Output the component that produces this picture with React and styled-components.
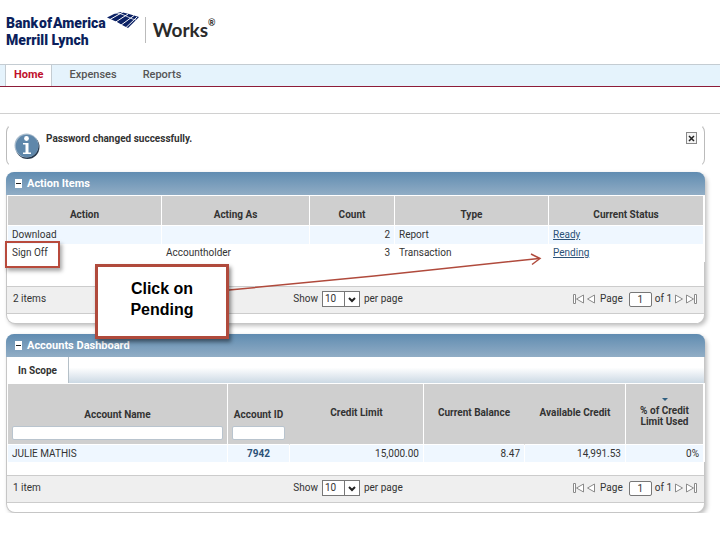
import React from 'react';
import styled, { createGlobalStyle } from 'styled-components';

const GlobalStyle = createGlobalStyle`
  * {
    box-sizing: border-box;
  }

  body {
    margin: 0;
    background: #fff;
    color: #333;
    font-family: Roboto, "Liberation Sans", Arial, sans-serif;
    font-size: 10px;
    line-height: 12px;
  }

  button, input, select {
    font: inherit;
    color: inherit;
  }
`;

const Page = styled.div`
  position: relative;
`;

const Header = styled.header`
  display: flex;
  align-items: flex-start;
  height: 64px;
  padding: 11px 6px 0;
`;

const BankName = styled.div`
  color: #0c1f5c;
  font-size: 14px;
  font-weight: 900;
  line-height: 17px;
  padding-top: 4px;
  white-space: nowrap;
`;

const BankLine = styled.div`
  display: flex;
  gap: 1px;
`;

const Flag = styled.svg`
  flex: none;
`;

const Works = styled.div`
  display: flex;
  height: 26px;
  margin: 6px 0 0 5px;
  padding-left: 7px;
  border-left: 1px solid #bbb;
  color: #2a2a2a;
  font-family: Lato, "Open Sans", sans-serif;
  font-size: 19px;
  font-weight: bold;
  line-height: 26px;

  sup {
    font-size: 9px;
    line-height: 12px;
  }
`;

const Nav = styled.nav`
  display: flex;
  height: 23px;
  padding-left: 5px;
  background: #e5f3fc;
  border-top: 1px solid #c4ccd2;
  border-bottom: 1px solid #8d1c38;
`;

const NavLink = styled.a`
  margin-right: ${(props) => (props.$active ? '4px' : '0')};
  padding: 0 ${(props) => (props.$active ? '8px' : '13px')};
  border: solid #c4ccd2;
  border-width: ${(props) => (props.$active ? '0 1px' : '0')};
  background: ${(props) => (props.$active ? '#fff' : 'transparent')};
  color: ${(props) => (props.$active ? '#c0102c' : '#555')};
  font-size: 11px;
  font-weight: ${(props) => (props.$active ? 'bold' : '500')};
  line-height: 20px;
  text-decoration: none;
`;

const SubNav = styled.div`
  height: 27px;
  border-bottom: 1px solid #d0d0d0;
`;

const Content = styled.main`
  display: flex;
  flex-direction: column;
  padding: 10px 15px 0 6px;
`;

const Message = styled.div`
  display: flex;
  align-items: flex-start;
  height: 43px;
  padding: 7px 7px 0 7px;
  border: 1px solid #fff;
  border-left-color: #bbb;
  border-right-color: #bbb;
  border-radius: 8px;
`;

const MessageText = styled.p`
  flex: 1;
  margin: 0 0 0 6px;
  padding-top: 1px;
  font-weight: bold;
`;

const CloseButton = styled.button`
  display: flex;
  align-items: center;
  justify-content: center;
  width: 11px;
  height: 12px;
  padding: 0;
  background: #f4f4f4;
  border: 1px solid #888;
`;

const Panel = styled.section`
  margin-top: ${(props) => props.$gap};
  padding-bottom: 9px;
  background: #fff;
  border: 1px solid #c6c6c6;
  border-top: 0;
  border-radius: 9px;
  box-shadow: 2px 2px 4px rgba(0, 0, 0, 0.25);
`;

const PanelTitle = styled.div`
  display: flex;
  align-items: center;
  gap: 5px;
  height: 23px;
  margin: 0 -1px;
  padding: 0 9px;
  background: linear-gradient(#608cb1, #91adc5);
  border-radius: 8px 8px 0 0;
  color: #fff;

  h2 {
    margin: 0;
    font-size: 11px;
    line-height: 14px;
  }
`;

const Toggle = styled.button`
  display: flex;
  align-items: center;
  width: 7px;
  height: 9px;
  padding: 0 1px;
  background: #fff;
  border: 0;

  &::before {
    content: '';
    flex: 1;
    height: 1px;
    background: #222;
  }
`;

const TabBar = styled.div`
  display: flex;
  height: 26px;
  background: linear-gradient(#fff 40%, #ccd9e4);
`;

const Tab = styled.button`
  width: 62px;
  padding: 2px 0 0;
  background: #fff;
  border: 0;
  border-right: 1px solid #b5c0c8;
  font-weight: bold;
`;

// Column widths are proportions: fixed layout scales them to the panel
const Table = styled.table`
  width: 100%;
  table-layout: fixed;
  border-collapse: separate;
  border-spacing: 0;
  border: solid #fff;
  border-width: 1px 1px 0;
`;

const HeadCell = styled.th`
  width: ${(props) => props.$width};
  height: ${(props) => (props.$tall ? '61px' : '30px')};
  padding: ${(props) => (props.$tall ? '0 4px 4px' : '8px 4px 0')};
  background: #cfcfcf;
  border-right: 1px solid ${(props) => (props.$plain ? '#cfcfcf' : '#fff')};
  border-bottom: 1px solid #fff;
  vertical-align: ${(props) => (props.$filter ? 'bottom' : 'middle')};
  line-height: 11px;
`;

const SortMark = styled.svg`
  display: block;
  margin: 0 auto 3px;
`;

const FilterInput = styled.input`
  display: block;
  width: 100%;
  height: 14px;
  margin-top: 6px;
  padding: 0 3px;
  background: #fff;
  border: 1px solid #b9c4ce;
  border-radius: 2px;
`;

const Cell = styled.td`
  height: ${(props) => (props.$low ? '17px' : '18px')};
  padding: 0 4px;
  background: ${(props) => (props.$shaded ? '#eff7ff' : '#fff')};
  border-right: 1px solid #fff;
  text-align: ${(props) => props.$align || 'left'};

  a {
    color: #2c5277;
  }
`;

const IdLink = styled.a`
  font-weight: bold;
  text-decoration: none;
`;

const PanelFooter = styled.div`
  display: grid;
  grid-template-columns: 1fr auto 1fr;
  align-items: center;
  height: 28px;
  margin-top: ${(props) => props.$gap};
  padding: 0 6px 2px;
  background: #efefef;
  border: solid #ccc;
  border-width: 1px 0;
`;

const PageSize = styled.label`
  display: flex;
  align-items: center;
  gap: 4px;
  margin-right: 15px;
`;

const SelectBox = styled.span`
  display: grid;
  grid-template-columns: 21px 15px;
  width: 38px;
  height: 16px;
  background: #fff;
  border: 1px solid #777;

  select, svg {
    grid-row: 1;
  }

  select {
    grid-column: 1 / 3;
    padding: 0 2px;
    appearance: none;
    background: transparent;
    border: 0;
    line-height: 14px;
  }

  svg {
    grid-column: 2;
    pointer-events: none;
  }
`;

const Pager = styled.div`
  display: flex;
  align-items: center;
  justify-content: flex-end;
  gap: 3px;

  label {
    display: flex;
    align-items: center;
    gap: 6px;
    margin-left: 2px;
  }
`;

const PageInput = styled.input`
  width: 23px;
  height: 15px;
  padding: 0;
  background: #fff;
  border: 1px solid #777;
  border-radius: 2px;
  text-align: center;
`;

const PagerButton = styled.button`
  display: flex;
  padding: 0;
  background: none;
  border: 0;
`;

// Training notes drawn over the page
const Highlight = styled.div`
  position: absolute;
  top: 241px;
  left: 5px;
  width: 55px;
  height: 27px;
  border: 2px solid #b84a3c;
  box-shadow: 2px 3px 4px rgba(0, 0, 0, 0.35);
`;

const Callout = styled.div`
  position: absolute;
  top: 264px;
  left: 95px;
  display: flex;
  align-items: center;
  justify-content: center;
  width: 134px;
  height: 75px;
  padding: 0 28px 6px;
  background: #fff;
  border: 3px solid #b04a3c;
  box-shadow: 2px 3px 4px rgba(0, 0, 0, 0.45);
  color: #000;
  font-family: "Liberation Sans", Arial, sans-serif;
  font-size: 16px;
  font-weight: bold;
  line-height: 21px;
  text-align: center;
`;

const Arrow = styled.svg`
  position: absolute;
  top: 250px;
  left: 229px;
  pointer-events: none;
`;

function BankFlag() {
  return (
    <Flag width="34" height="19" viewBox="0 0 34 19">
      <path d="M1 6.500 9 2.500 15 1l8 2 10 3-11 11-5-2.500-6-3.500z" fill="#0c2265" />
      <g fill="none" stroke="#fff">
        <path d="M4 8.500 17 1M9 11.500 22 3M14.500 14.500 28 4.500M19.500 17 31 6" />
        <path d="M8 2c5 0 8 1 12 3s6 3 10 4" strokeWidth=".8" />
      </g>
    </Flag>
  );
}

function InfoIcon() {
  return (
    <svg width="26" height="28" viewBox="0 0 26 28">
      <circle cx="13.5" cy="15" r="12" fill="#27384c" />
      <circle cx="12.5" cy="13.5" r="12" fill="#a9bccd" />
      <circle cx="13" cy="14" r="11.3" fill="#5f87aa" />
      <circle cx="12.5" cy="6.5" r="2.4" fill="#fff" />
      <path d="M9 11h5.5v9.500H17V22H9v-1.500h2.500v-8H9z" fill="#fff" />
    </svg>
  );
}

function PagerIcon({ bar, back }) {
  return (
    <svg width={bar ? 12 : 8} height="10" viewBox={bar ? '0 0 12 10' : '0 0 8 10'}>
      <g
        fill="#fff"
        stroke="#8a8a8a"
        transform={back ? `translate(${bar ? 12 : 8} 0) scale(-1 1)` : undefined}
      >
        <path d="M.5 1v8l7-4z" />
        {bar && <path d="M8.500.5h2v9h-2z" />}
      </g>
    </svg>
  );
}

function Footer({ count, gap }) {
  return (
    <PanelFooter $gap={gap}>
      <span>{count}</span>
      <PageSize>
        Show
        <SelectBox>
          <select defaultValue="10">
            <option>10</option>
            <option>25</option>
            <option>50</option>
          </select>
          <svg width="15" height="14" viewBox="0 0 15 14">
            <path d="M.5 0v14" stroke="#777" />
            <path d="m5 6 3 3 3-3" fill="none" stroke="#222" strokeWidth="2" />
          </svg>
        </SelectBox>
        per page
      </PageSize>
      <Pager>
        <PagerButton aria-label="First page"><PagerIcon bar back /></PagerButton>
        <PagerButton aria-label="Previous page"><PagerIcon back /></PagerButton>
        <label>
          Page
          <PageInput type="text" defaultValue="1" />
        </label>
        <span>of 1</span>
        <PagerButton aria-label="Next page"><PagerIcon /></PagerButton>
        <PagerButton aria-label="Last page"><PagerIcon bar /></PagerButton>
      </Pager>
    </PanelFooter>
  );
}

function ActionItems() {
  return (
    <Panel $gap="5px">
      <PanelTitle>
        <Toggle aria-label="Collapse" />
        <h2>Action Items</h2>
      </PanelTitle>
      <Table>
        <thead>
          <tr>
            <HeadCell $width="154px">Action</HeadCell>
            <HeadCell $width="148px">Acting As</HeadCell>
            <HeadCell $width="85px">Count</HeadCell>
            <HeadCell $width="154px">Type</HeadCell>
            <HeadCell $width="155px">Current Status</HeadCell>
          </tr>
        </thead>
        <tbody>
          <tr>
            <Cell $shaded>Download</Cell>
            <Cell $shaded />
            <Cell $shaded $align="right">2</Cell>
            <Cell $shaded>Report</Cell>
            <Cell $shaded><a href="#ready">Ready</a></Cell>
          </tr>
          <tr>
            <Cell>Sign Off</Cell>
            <Cell>Accountholder</Cell>
            <Cell $align="right">3</Cell>
            <Cell>Transaction</Cell>
            <Cell><a href="#pending">Pending</a></Cell>
          </tr>
        </tbody>
      </Table>
      <Footer count="2 items" gap="24px" />
    </Panel>
  );
}

function AccountsDashboard() {
  return (
    <Panel $gap="10px">
      <PanelTitle>
        <Toggle aria-label="Collapse" />
        <h2>Accounts Dashboard</h2>
      </PanelTitle>
      <TabBar>
        <Tab>In Scope</Tab>
      </TabBar>
      <Table>
        <thead>
          <tr>
            <HeadCell $tall $filter $width="220px">
              Account Name
              <FilterInput type="text" aria-label="Account Name" />
            </HeadCell>
            <HeadCell $tall $filter $plain $width="62px">
              Account ID
              <FilterInput type="text" aria-label="Account ID" />
            </HeadCell>
            <HeadCell $tall $width="134px">Credit Limit</HeadCell>
            <HeadCell $tall $plain $width="101px">Current Balance</HeadCell>
            <HeadCell $tall $width="101px">Available Credit</HeadCell>
            <HeadCell $tall $width="78px">
              <SortMark width="6" height="4" viewBox="0 0 6 4">
                <path d="M0 0h6L3 3z" fill="#2f5f80" />
              </SortMark>
              % of Credit Limit Used
            </HeadCell>
          </tr>
        </thead>
        <tbody>
          <tr>
            <Cell $low $shaded>JULIE MATHIS</Cell>
            <Cell $low $shaded $align="center"><IdLink href="#7942">7942</IdLink></Cell>
            <Cell $low $shaded $align="right">15,000.00</Cell>
            <Cell $low $shaded $align="right">8.47</Cell>
            <Cell $low $shaded $align="right">14,991.53</Cell>
            <Cell $low $shaded $align="right">0%</Cell>
          </tr>
        </tbody>
      </Table>
      <Footer count="1 item" gap="13px" />
    </Panel>
  );
}

export default function App() {
  return (
    <Page>
      <GlobalStyle />
      <Header>
        <BankName>
          <BankLine>
            <span>Bank</span>
            <span>of</span>
            <span>America</span>
          </BankLine>
          Merrill Lynch
        </BankName>
        <BankFlag />
        <Works>
          Works
          <sup>®</sup>
        </Works>
      </Header>
      <Nav>
        <NavLink href="#home" $active>Home</NavLink>
        <NavLink href="#expenses">Expenses</NavLink>
        <NavLink href="#reports">Reports</NavLink>
      </Nav>
      <SubNav />
      <Content>
        <Message>
          <InfoIcon />
          <MessageText>Password changed successfully.</MessageText>
          <CloseButton aria-label="Close">
            <svg width="7" height="7" viewBox="0 0 7 7">
              <path d="m1 1 5 5M6 1 1 6" stroke="#222" strokeWidth="1.500" />
            </svg>
          </CloseButton>
        </Message>
        <ActionItems />
        <AccountsDashboard />
      </Content>
      <Highlight />
      <Arrow width="316" height="44" viewBox="0 0 316 44">
        <g fill="none" stroke="#b04a3c" strokeWidth="1.500">
          <path d="M0 40 145 26 310 8.500" />
          <path d="m302 4 9 4.500-8 6" />
        </g>
      </Arrow>
      <Callout>Click on Pending</Callout>
    </Page>
  );
}
